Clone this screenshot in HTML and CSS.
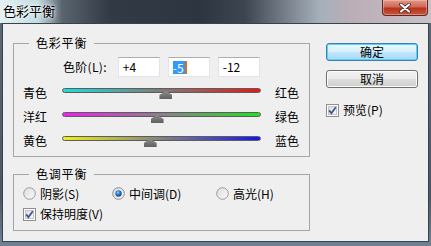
FILE: index.html
```html
<!doctype html>
<html lang="zh-CN">
<head>
  <meta charset="utf-8">
  <title>色彩平衡</title>
  <link rel="stylesheet" href="styles.css">
</head>
<body>

  <!-- shared control glyphs -->
  <svg class="defs" width="0" height="0" aria-hidden="true">
    <defs>
      <linearGradient id="boxFill" x1="0" y1="0" x2="1" y2="1">
        <stop offset="0" stop-color="#dcdcdc"/>
        <stop offset="1" stop-color="#fbfbfb"/>
      </linearGradient>
      <radialGradient id="dotFill" cx="0.4" cy="0.35" r="0.7">
        <stop offset="0" stop-color="#8fd0ff"/>
        <stop offset="0.45" stop-color="#2a7cd0"/>
        <stop offset="1" stop-color="#0b3f78"/>
      </radialGradient>
      <symbol id="radio" viewBox="0 0 13 13">
        <circle cx="6.5" cy="6.5" r="5.8" fill="url(#boxFill)" stroke="#9a9a9a"/>
      </symbol>
      <symbol id="radioOn" viewBox="0 0 13 13">
        <circle cx="6.5" cy="6.5" r="5.8" fill="url(#boxFill)" stroke="#8a8a8a"/>
        <circle cx="6.5" cy="6.5" r="3.2" fill="url(#dotFill)"/>
      </symbol>
      <symbol id="checkOn" viewBox="0 0 13 13">
        <rect x="0.5" y="0.5" width="12" height="12" fill="#fff" stroke="#8e8f8f"/>
        <rect x="2.5" y="2.5" width="8" height="8" fill="url(#boxFill)" stroke="#c4c4c4"/>
        <path d="M3.2 6.4 L5.4 9.2 L9.8 3.3" fill="none" stroke="#3d55a0" stroke-width="1.8"/>
      </symbol>
    </defs>
  </svg>

  <div class="window">
    <!-- title bar -->
    <div class="titlebar">
      <span class="title">色彩平衡</span>
      <span class="close" aria-label="关闭">
        <svg width="12" height="10" viewBox="0 0 12 10">
          <path d="M2 1.5 L10 8.5 M10 1.5 L2 8.5" stroke="#3a2a2a" stroke-width="3.6" stroke-linecap="round"/>
          <path d="M2 1.5 L10 8.5 M10 1.5 L2 8.5" stroke="#fff" stroke-width="2" stroke-linecap="round"/>
        </svg>
      </span>
    </div>

    <div class="client">
      <div class="main">
        <fieldset class="group balance">
          <legend>色彩平衡</legend>

          <div class="levels">
            <span class="levels-label">色阶(L):</span>
            <span class="field">+4</span>
            <span class="field"><span class="sel">-5</span><span class="caret"></span></span>
            <span class="field">-12</span>
          </div>

          <div class="sliders">
            <span class="lab">青色</span>
            <div class="track cyan-red"><span class="thumb" style="left:52%"></span></div>
            <span class="lab lab-r">红色</span>

            <span class="lab">洋红</span>
            <div class="track magenta-green"><span class="thumb" style="left:47.5%"></span></div>
            <span class="lab lab-r">绿色</span>

            <span class="lab">黄色</span>
            <div class="track yellow-blue"><span class="thumb" style="left:44%"></span></div>
            <span class="lab lab-r">蓝色</span>
          </div>
        </fieldset>

        <fieldset class="group tone">
          <legend>色调平衡</legend>
          <div class="radios">
            <label class="opt"><svg class="ico"><use href="#radio"/></svg>阴影(S)</label>
            <label class="opt"><svg class="ico"><use href="#radioOn"/></svg>中间调(D)</label>
            <label class="opt"><svg class="ico"><use href="#radio"/></svg>高光(H)</label>
          </div>
          <label class="opt keep"><svg class="ico"><use href="#checkOn"/></svg>保持明度(V)</label>
        </fieldset>
      </div>

      <div class="side">
        <button class="btn btn-default" type="button">确定</button>
        <button class="btn" type="button">取消</button>
        <label class="opt preview"><svg class="ico"><use href="#checkOn"/></svg>预览(P)</label>
      </div>
    </div>
  </div>

</body>
</html>
```

FILE: styles.css
```css
/* ===== dialog tokens ===== */
:root{
  --face:#efefef; --line:#a5a5a5; --text:#000;
  --frame:#56626e; --edge:#38424c;
}
*{ box-sizing:border-box }
html,body{ margin:0; height:100% }
body{ font:12px/1.2 "Noto Sans CJK SC","Microsoft YaHei",sans-serif; color:var(--text); background:var(--frame); }
.defs{ position:absolute; width:0; height:0; overflow:hidden }

.window{ width:431px; height:246px; display:flex; flex-direction:column; padding:0 2px 4px;
  background:linear-gradient(180deg,#5c6a78 0,#4a5866 80%,#6f8294 100%); }

/* title bar over blurred desktop */
.titlebar{ height:23px; margin:0 -2px; display:flex; align-items:flex-start; justify-content:space-between; padding:0 3px 0 3px;
  background:linear-gradient(90deg,#e2f1f4 0,#c3dde2 38px,#5a646e 62px,#323b45 110px,#2d3640 200px,#3d4650 245px,#767f89 285px,#a6b0ba 320px,#bcaeb6 355px,#c7c1c8 431px); }
.title{ font-size:13px; line-height:14px; margin-top:4px; color:#000; text-shadow:0 0 6px #fff,0 0 3px #fff; }
.close{ width:46px; height:16px; display:flex; align-items:center; justify-content:center; border:1px solid #5b2a24; border-top:0; border-radius:0 0 4px 4px;
  background:linear-gradient(180deg,#e19a8a 0,#cf6a55 45%,#b8321c 55%,#c8553c 100%); box-shadow:inset 0 0 0 1px rgba(255,200,190,.45); }

/* client area */
.client{ flex:1; display:flex; align-items:flex-start; background:var(--face); border:1px solid var(--edge); padding:12px 0 0 10px; }
.main{ display:flex; flex-direction:column; gap:10px; }

.group{ width:297px; margin:0; min-width:0; border:1px solid var(--line); }
.group legend{ padding:0 7px 0 7px; margin-left:6px; font-size:12px; line-height:14px; letter-spacing:.8px; }
.balance{ padding:7px 0 3px 9px; }
.tone{ padding:3px 0 6px 9px; }

.levels{ display:flex; align-items:center; height:20px; padding-left:40px; gap:8px; margin-bottom:4px; }
.levels-label{ margin-right:3px; letter-spacing:.3px; }
.field{ width:42px; height:20px; display:flex; align-items:center; padding-left:4px; background:#fff;
  border:1px solid #dfe5ec; border-top-color:#abadb3; font-size:12px; }
.sel{ background:#3399ff; color:#fff; padding:0 1px 0 0; line-height:13px; }
.caret{ width:2px; height:13px; background:#e36c0a; }

.sliders{ display:grid; grid-template-columns:39px 199px auto; grid-auto-rows:24px; }
.lab{ align-self:center; }
.lab-r{ margin-left:14px; }
.track{ position:relative; align-self:start; margin-top:7px; height:5px; border:1px solid #5d5d5d; border-radius:3px; }
.cyan-red{ background:linear-gradient(90deg,#18dede,#e81616); }
.magenta-green{ background:linear-gradient(90deg,#f41cf4,#1ee41e); }
.yellow-blue{ background:linear-gradient(90deg,#f0f010,#1414f0); }
.thumb{ position:absolute; top:2px; width:13px; height:8px; margin-left:-6px;
  background:linear-gradient(180deg,#8d8d8d,#5f5f5f);
  clip-path:polygon(50% 0,100% 50%,100% 100%,0 100%,0 50%); }

.radios{ display:grid; grid-template-columns:89px 104px auto; height:20px; align-items:center; }
.opt{ display:flex; align-items:center; gap:4px; white-space:nowrap; }
.ico{ width:13px; height:13px; flex:none; }
.keep{ height:20px; }

/* right column */
.side{ width:92px; margin-left:16px; padding-top:7px; display:flex; flex-direction:column; gap:9px; }
.btn{ appearance:none; height:18px; padding:0; font:12px/1 "Noto Sans CJK SC","Microsoft YaHei",sans-serif; color:#000;
  border:1px solid #707070; border-radius:3px;
  background:linear-gradient(180deg,#f2f2f2 0,#ebebeb 48%,#dddddd 52%,#cfcfcf 100%); box-shadow:inset 0 0 0 1px #fcfcfc; }
.btn-default{ border-color:#3c7fb1; background:linear-gradient(180deg,#eaf6fd 0,#d9f0fc 48%,#bee6fd 52%,#a7d9f5 100%); box-shadow:inset 0 0 0 1px #5ad0fb; }
.preview{ margin-top:6px; }
```
